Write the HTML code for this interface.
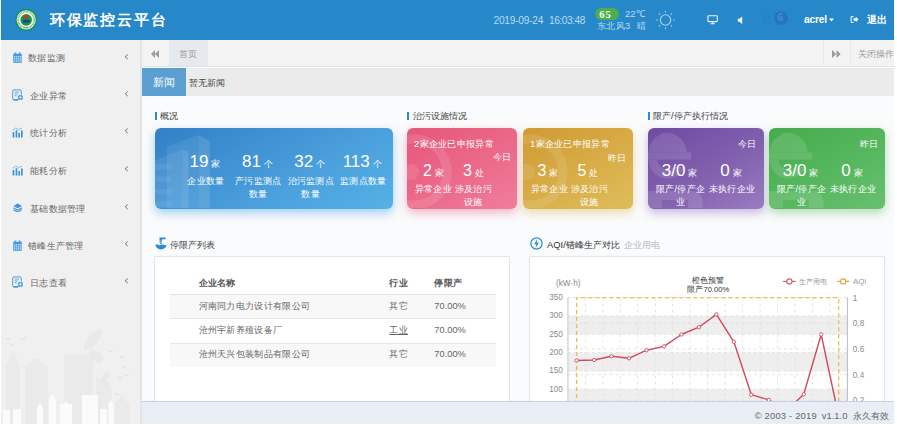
<!DOCTYPE html>
<html><head><meta charset="utf-8">
<style>
*{margin:0;padding:0;box-sizing:border-box}
html,body{width:897px;height:429px;overflow:hidden;background:#fff;font-family:"Liberation Sans",sans-serif}
.abs{position:absolute;white-space:nowrap}
#app{position:absolute;left:1px;top:0;width:893px;height:424px;overflow:hidden;background:#fafbfc}
#hdr{position:absolute;left:0;top:0;width:893px;height:40px;background:#2687c9}
#side{position:absolute;left:0;top:40px;width:139px;height:384px;background:#f0f0f0}
#sideb{position:absolute;left:139px;top:40px;width:2px;height:384px;background:#dfe5ea}
.mi{position:absolute;left:0;width:139px;height:20px;font-size:9.3px;color:#666}
.mi .t{position:absolute;left:27px;top:4px;font-size:9.4px;letter-spacing:0.3px;white-space:nowrap;line-height:12px}
.mi .ch{position:absolute;left:123px;top:5px}
.mi svg.ic{position:absolute;left:11px;top:4px}
#tabs{position:absolute;left:141px;top:40px;width:752px;height:27px;background:#f3f3f3;border-bottom:1px solid #dce6ee}
#news{position:absolute;left:141px;top:68px;width:752px;height:28px;background:#ebebeb}
.sec{position:absolute;font-size:9.4px;color:#444;white-space:nowrap;line-height:10px}
.sec .bar{position:absolute;left:-5.3px;top:1px;width:2.2px;height:8px;background:#2a8ad4}
.card{position:absolute;top:128px;height:80.6px;border-radius:6px;color:#fff;overflow:hidden}
.num{position:absolute;top:24px;height:20px;text-align:center;white-space:nowrap;line-height:20px}
.num b{font-weight:normal;font-size:17px;vertical-align:baseline}
.num s{text-decoration:none;font-size:9.4px;margin-left:3px;vertical-align:baseline}
.lab{position:absolute;top:47px;text-align:center;font-size:9.4px;line-height:12.8px;letter-spacing:0.3px;word-break:break-all}
.t9{font-size:9.4px;line-height:10px;letter-spacing:0.3px}
.th{font-size:9.3px;line-height:10px;color:#555;font-weight:bold;letter-spacing:0.3px}
.td{font-size:9.3px;line-height:10px;color:#666;letter-spacing:0.3px}
.td2{font-size:9.3px;line-height:10px;color:#666}
.panel{position:absolute;top:256px;height:170px;background:#fff;border:1px solid #e3e7ec;border-radius:2px;box-shadow:0 0 2px rgba(0,0,0,0.06)}
#foot{position:absolute;left:141px;top:401px;width:752px;height:23px;background:#e9edf4;border-top:1px solid #c9cde6;font-size:9.5px;color:#555}
</style></head><body>
<div id="app">
  <!-- HEADER -->
  <div id="hdr">
    <svg class="abs" style="left:13.4px;top:8.7px" width="24" height="24" viewBox="0 0 24 24">
      <circle cx="12.2" cy="10.85" r="10.8" fill="#139043"/>
      <circle cx="12.2" cy="10.85" r="9.6" fill="#f2faf4"/>
      <circle cx="12.2" cy="10.85" r="8.1" fill="none" stroke="#5cb878" stroke-width="1.8" stroke-dasharray="0.9 0.6"/>
      <circle cx="12.2" cy="10.85" r="5.8" fill="#179447"/>
      <circle cx="12.1" cy="7.5" r="1.9" fill="#e8262c"/>
      <path d="M8.6 12.8L10 10.6 11 11.6 12.3 9.8 13.5 11.4 14.6 10.4 16 12.8 15.2 13.6H9.4z" fill="#283a8a"/>
      <path d="M10 18.3h4.4" stroke="#777" stroke-width="1" stroke-dasharray="1 0.5"/>
    </svg>
    <div class="abs" style="left:48.8px;top:11.4px;font-size:15.1px;line-height:18px;letter-spacing:1.8px;font-weight:bold;color:#fff">环保监控云平台</div>
    <div class="abs" style="left:492.5px;top:14.5px;font-size:10.2px;line-height:11px;color:#b9dbf3;letter-spacing:-0.25px">2019-09-24<span style="margin-left:5.8px;letter-spacing:-0.45px">16:03:48</span></div>
    <div class="abs" style="left:594px;top:8px;width:24px;height:12px;border-radius:6px;background:#4cae4c"></div>
    <div class="abs" style="left:598.3px;top:9.5px;font-size:10.6px;line-height:10px;letter-spacing:1px;font-weight:bold;color:#fff;font-family:'Liberation Serif',serif">65</div>
    <div class="abs" style="left:624px;top:9px;font-size:9.5px;line-height:10px;color:#b9dbf3">22℃</div>
    <div class="abs" style="left:596px;top:21px;font-size:9.3px;line-height:10px;color:#b9dbf3;letter-spacing:0.3px">东北风3<span style="margin-left:6.5px">晴</span></div>
    <svg class="abs" style="left:654px;top:10px" width="21" height="21" viewBox="0 0 21 21" fill="none" stroke="#a9d3f2" stroke-width="1.1">
      <circle cx="10.5" cy="10" r="5.2"/>
      <path d="M10.5 0.8v1.6M10.5 17.6v1.6M1.3 10h1.6M18.1 10h1.6M4 3.5l1.1 1.1M15.9 15.4l1.1 1.1M4 16.5l1.1-1.1M15.9 4.6l1.1-1.1"/>
    </svg>
    <svg class="abs" style="left:705.5px;top:14.5px" width="12" height="10" viewBox="0 0 12 10" fill="none" stroke="#eaf4fb" stroke-width="1.1">
      <rect x="0.9" y="0.8" width="9.4" height="5.8" rx="0.8"/>
      <path d="M5.6 6.8v1.6M3.4 8.8h4.4"/>
    </svg>
    <svg class="abs" style="left:736px;top:15.5px" width="7" height="9" viewBox="0 0 7 9"><path d="M0.8 2.8h1.8L5.2 0.5v7.5L2.6 5.7H0.8z" fill="#fff"/></svg>
    <svg class="abs" style="left:761px;top:14px" width="10" height="11" viewBox="0 0 10 11" fill="none" stroke="#2d7cc2" stroke-width="1"><path d="M5 1C2.8 1 2.3 3 2.3 5v2.5L1 9h8L7.7 7.5V5C7.7 3 7.2 1 5 1zM4 10h2"/></svg>
    <div class="abs" style="left:773px;top:11px;width:13.5px;height:13.5px;border-radius:7px;background:#2676bd"></div>
    <div class="abs" style="left:776.5px;top:12.3px;font-size:10px;line-height:11px;font-weight:bold;color:#3b8fd6">6</div>
    <div class="abs" style="left:803px;top:14px;font-size:10.2px;line-height:11px;font-weight:bold;color:#fff;letter-spacing:-0.2px">acrel</div>
    <svg class="abs" style="left:828px;top:18.3px" width="5" height="4" viewBox="0 0 5 4"><path d="M0 0.5h5L2.5 3.5z" fill="#fff"/></svg>
    <svg class="abs" style="left:849px;top:16px" width="9" height="7" viewBox="0 0 9 7" fill="none" stroke="#fff" stroke-width="1"><path d="M3.5 0.6H1.1v5.8h2.4"/><path d="M3.5 2.3h2.3V0.8L8.5 3.5 5.8 6.2V4.7H3.5z" fill="#fff" stroke="none"/></svg>
    <div class="abs" style="left:866px;top:14px;font-size:10.2px;line-height:11px;font-weight:bold;color:#fff">退出</div>
  </div>

  <!-- SIDEBAR -->
  <div id="side">
    <svg class="abs" style="left:0;top:280px" width="139" height="104" viewBox="0 0 139 104">
      <g fill="#eaeaea">
        <path d="M5 104V43h2v-4h2v-4h2v-3h2v3h2v4h2v4h2v61z"/>
        <path d="M24 104V45h5v-3h3v-3h7v3h3v3h5v59z"/>
        <path d="M63 104V35h29v69z"/>
        <path d="M95 104V56l16 14v34z"/>
        <path d="M114 104V82h2v-3h3v-4h3v4h3v3h4v22z"/>
      </g>
      <g fill="#e9e9e9">
        <ellipse cx="92" cy="20" rx="5" ry="13" transform="rotate(40 92 20)"/>
        <ellipse cx="95" cy="36" rx="5" ry="8" transform="rotate(-50 95 36)"/>
        <ellipse cx="104" cy="57" rx="3" ry="7" transform="rotate(35 104 57)"/>
        <ellipse cx="106" cy="64" rx="3" ry="4" transform="rotate(-50 106 64)"/>
      </g>
      <g fill="#fbfbfb">
        <path d="M2 104V90h7v14z"/><path d="M12 104V89h8v15z"/>
        <path d="M36 104V88l3-5 3 5v16z"/><path d="M48 104V80l3-6 4 6v24z"/>
        <path d="M59 104V84h3l3-3 3 3h3v20z"/><path d="M81 104V75h16v29z"/>
        <path d="M99 104V89h7v15z"/><path d="M107.5 104V84l2.5-4 2.5 4v20z"/>
      </g>
      <g fill="none" stroke="#d8d8d8" stroke-width="0.8">
        <path d="M5 18l2 2 2-2M9 24l2 2 2-2M20 18l2 2 3-3"/>
        <path d="M108 30l2 2 2-2M119 36l2 2 2-2M121 46l2 2 2-2M124 54l2 2 2-2M114 73l2 2 2-2M117 57l2 2 2-2"/>
      </g>
    </svg>
    <div class="mi" style="top:8px">
      <svg class="ic" style="left:10.5px" width="11" height="11" viewBox="0 0 11 11"><path d="M1.2 1.8h8.6v9H1.2z" fill="#4598e2"/><path d="M2.6 0.4h1.6v2.4H2.6zM6.8 0.4h1.6v2.4H6.8z" fill="#4598e2"/><g fill="#d4e7f8"><rect x="2.1" y="4.1" width="1.3" height="1.3"/><rect x="4.1" y="4.1" width="1.3" height="1.3"/><rect x="6.1" y="4.1" width="1.3" height="1.3"/><rect x="8.1" y="4.1" width="1.3" height="1.3"/><rect x="2.1" y="6.2" width="1.3" height="1.3"/><rect x="4.1" y="6.2" width="1.3" height="1.3"/><rect x="6.1" y="6.2" width="1.3" height="1.3"/><rect x="8.1" y="6.2" width="1.3" height="1.3"/><rect x="2.1" y="8.3" width="1.3" height="1.3"/><rect x="4.1" y="8.3" width="1.3" height="1.3"/><rect x="6.1" y="8.3" width="1.3" height="1.3"/><rect x="8.1" y="8.3" width="1.3" height="1.3"/></g></svg>
      <span class="t">数据监测</span><svg class="ch" style="top:6px" width="5" height="6" viewBox="0 0 5 6"><path d="M3.8 0.5L1.2 2.8 3.8 5.1" fill="none" stroke="#666" stroke-width="0.9"/></svg>
    </div>
    <div class="mi" style="top:45.6px">
      <svg class="ic" style="top:3px;left:11px" width="12" height="12" viewBox="0 0 12 12"><path d="M6.2 10.9H1.9c-.7 0-1.2-.5-1.2-1.2V2.1c0-.7.5-1.2 1.2-1.2h6.2c.7 0 1.2.5 1.2 1.2v3.4" fill="none" stroke="#4a9be0" stroke-width="1"/><path d="M2.6 3.1h4.6M2.6 4.9h3.2M2.6 6.7h2" stroke="#5aa5e6" stroke-width="0.9"/><path d="M1.5 10.9h4.5" stroke="#2f86d8" stroke-width="1.1"/><circle cx="8.4" cy="8.4" r="2.6" fill="#4a9be0"/><circle cx="8.4" cy="8.4" r="1.1" fill="#e6f0fa"/><path d="M8.4 5.6v1.2M8.4 10v1.2M5.6 8.4h1.2M10 8.4h1.2" stroke="#e6f0fa" stroke-width="0.5"/></svg>
      <span class="t" style="left:29px">企业异常</span><svg class="ch" width="5" height="6" viewBox="0 0 5 6"><path d="M3.8 0.5L1.2 2.8 3.8 5.1" fill="none" stroke="#666" stroke-width="0.9"/></svg>
    </div>
    <div class="mi" style="top:83.3px">
      <svg class="ic" style="left:11.4px" width="11" height="11" viewBox="0 0 11 11"><g fill="#3d92dc"><rect x="0.6" y="5" width="1.7" height="5.5"/><rect x="3.6" y="3.2" width="1.7" height="7.3"/><rect x="6.3" y="6" width="1.7" height="4.5"/><rect x="9" y="3.5" width="1.7" height="7"/></g><path d="M0.6 3.3L3.8 1 6.5 2.8 10 0.8" fill="none" stroke="#6aacea" stroke-width="0.8"/></svg>
      <span class="t" style="left:29px">统计分析</span><svg class="ch" width="5" height="6" viewBox="0 0 5 6"><path d="M3.8 0.5L1.2 2.8 3.8 5.1" fill="none" stroke="#666" stroke-width="0.9"/></svg>
    </div>
    <div class="mi" style="top:121px">
      <svg class="ic" style="left:11.4px" width="11" height="11" viewBox="0 0 11 11"><g fill="#3d92dc"><rect x="0.6" y="5" width="1.7" height="5.5"/><rect x="3.6" y="3.2" width="1.7" height="7.3"/><rect x="6.3" y="6" width="1.7" height="4.5"/><rect x="9" y="3.5" width="1.7" height="7"/></g><path d="M0.6 3.3L3.8 1 6.5 2.8 10 0.8" fill="none" stroke="#6aacea" stroke-width="0.8"/></svg>
      <span class="t" style="left:29px">能耗分析</span><svg class="ch" width="5" height="6" viewBox="0 0 5 6"><path d="M3.8 0.5L1.2 2.8 3.8 5.1" fill="none" stroke="#666" stroke-width="0.9"/></svg>
    </div>
    <div class="mi" style="top:158.6px">
      <svg class="ic" style="left:12px;top:4.2px" width="9.4" height="9.6" viewBox="0 0 10 10"><path d="M5 0.5L9.5 3 5 5.5 0.5 3z" fill="#3d92dc"/><path d="M0.5 5L5 7.5 9.5 5M0.5 7L5 9.5 9.5 7" fill="none" stroke="#3d92dc" stroke-width="1.2"/></svg>
      <span class="t" style="left:29px">基础数据管理</span><svg class="ch" width="5" height="6" viewBox="0 0 5 6"><path d="M3.8 0.5L1.2 2.8 3.8 5.1" fill="none" stroke="#666" stroke-width="0.9"/></svg>
    </div>
    <div class="mi" style="top:195.5px">
      <svg class="ic" style="left:10.5px" width="11" height="11" viewBox="0 0 11 11"><path d="M1.2 1.8h8.6v9H1.2z" fill="#4598e2"/><path d="M2.6 0.4h1.6v2.4H2.6zM6.8 0.4h1.6v2.4H6.8z" fill="#4598e2"/><g fill="#d4e7f8"><rect x="2.1" y="4.1" width="1.3" height="1.3"/><rect x="4.1" y="4.1" width="1.3" height="1.3"/><rect x="6.1" y="4.1" width="1.3" height="1.3"/><rect x="8.1" y="4.1" width="1.3" height="1.3"/><rect x="2.1" y="6.2" width="1.3" height="1.3"/><rect x="4.1" y="6.2" width="1.3" height="1.3"/><rect x="6.1" y="6.2" width="1.3" height="1.3"/><rect x="8.1" y="6.2" width="1.3" height="1.3"/><rect x="2.1" y="8.3" width="1.3" height="1.3"/><rect x="4.1" y="8.3" width="1.3" height="1.3"/><rect x="6.1" y="8.3" width="1.3" height="1.3"/><rect x="8.1" y="8.3" width="1.3" height="1.3"/></g></svg>
      <span class="t">错峰生产管理</span><svg class="ch" width="5" height="6" viewBox="0 0 5 6"><path d="M3.8 0.5L1.2 2.8 3.8 5.1" fill="none" stroke="#666" stroke-width="0.9"/></svg>
    </div>
    <div class="mi" style="top:232.7px">
      <svg class="ic" style="top:3px;left:11px" width="12" height="12" viewBox="0 0 12 12"><path d="M6.2 10.9H1.9c-.7 0-1.2-.5-1.2-1.2V2.1c0-.7.5-1.2 1.2-1.2h6.2c.7 0 1.2.5 1.2 1.2v3.4" fill="none" stroke="#4a9be0" stroke-width="1"/><path d="M2.6 3.1h4.6M2.6 4.9h3.2M2.6 6.7h2" stroke="#5aa5e6" stroke-width="0.9"/><path d="M1.5 10.9h4.5" stroke="#2f86d8" stroke-width="1.1"/><circle cx="8.4" cy="8.4" r="2.6" fill="#4a9be0"/><circle cx="8.4" cy="8.4" r="1.1" fill="#e6f0fa"/><path d="M8.4 5.6v1.2M8.4 10v1.2M5.6 8.4h1.2M10 8.4h1.2" stroke="#e6f0fa" stroke-width="0.5"/></svg>
      <span class="t" style="left:29px">日志查看</span><svg class="ch" width="5" height="6" viewBox="0 0 5 6"><path d="M3.8 0.5L1.2 2.8 3.8 5.1" fill="none" stroke="#666" stroke-width="0.9"/></svg>
    </div>
  </div>
  <div id="sideb"></div>

  <!-- TABS -->
  <div id="tabs">
    <svg class="abs" style="left:9.3px;top:10px" width="8" height="8" viewBox="0 0 8 8"><path d="M4 0v8L0 4zM8 0v8L4 4z" fill="#9a9a9a"/></svg>
    <div class="abs" style="left:27px;top:0;width:39px;height:26px;background:#e6eaee"></div>
    <div class="abs" style="left:37px;top:9px;font-size:9.3px;line-height:10px;color:#999">首页</div>
    <div class="abs" style="left:681.4px;top:0;width:1px;height:26px;background:#e9e9e9"></div>
    <div class="abs" style="left:707.8px;top:0;width:1px;height:26px;background:#e9e9e9"></div>
    <svg class="abs" style="left:690px;top:10px" width="9" height="8" viewBox="0 0 9 8"><path d="M0 0v8L4.2 4zM4.5 0v8L8.7 4z" fill="#9a9a9a"/></svg>
    <div class="abs" style="left:715.5px;top:9px;font-size:9.3px;line-height:10px;color:#999;letter-spacing:0.3px">关闭操作</div>
  </div>
  <div id="news">
    <div class="abs" style="left:0;top:0;width:44px;height:28px;background:#5b9fd0"></div>
    <div class="abs" style="left:11.3px;top:8.4px;font-size:10.9px;line-height:12px;color:#fff">新闻</div>
    <div class="abs" style="left:47px;top:10px;font-size:9.3px;line-height:10px;color:#444">暂无新闻</div>
  </div>

  <!-- SECTION TITLES -->
  <div class="sec" style="left:159px;top:111px">概况<i class="bar"></i></div>
  <div class="sec" style="left:411.5px;top:111px">治污设施情况<i class="bar"></i></div>
  <div class="sec" style="left:652px;top:111px">限产/停产执行情况<i class="bar"></i></div>

  <!-- BLUE CARD -->
  <div class="card" style="left:154px;width:238px;background:linear-gradient(150deg,#3280c7 0%,#4a9fdc 60%,#55b1e6 100%);box-shadow:0 4px 10px rgba(70,165,230,0.5)">
    <svg class="abs" style="left:0;top:0" width="80" height="80" viewBox="0 0 80 80">
      <g fill="#fff">
        <path d="M12 18.5L43.7 7.1 54.8 13.2V80H12z" fill-opacity="0.08"/>
        <path d="M43.7 7.1L54.8 13.2V80H43.7z" fill-opacity="0.05"/>
        <path d="M0 32.5L27.5 21.3 33.5 24V80H0z" fill-opacity="0.08"/>
        <path d="M27.5 21.3L33.5 24V80H27.5z" fill-opacity="0.05"/>
        <rect x="0" y="36" width="16.5" height="5.5" fill-opacity="0.07"/>
        <rect x="0" y="48.5" width="16.5" height="5.5" fill-opacity="0.07"/>
        <rect x="0" y="61" width="16.5" height="5.5" fill-opacity="0.07"/>
        <rect x="0" y="73" width="16.5" height="5.5" fill-opacity="0.07"/>
      </g>
    </svg>
    <div class="num" style="left:23.8px;width:52.4px"><b>19</b><s>家</s></div>
    <div class="num" style="left:76.2px;width:52.4px"><b>81</b><s>个</s></div>
    <div class="num" style="left:128.6px;width:52.4px"><b>32</b><s>个</s></div>
    <div class="num" style="left:181px;width:52.4px"><b>113</b><s>个</s></div>
    <div class="lab" style="left:24.8px;width:52.4px">企业数量</div>
    <div class="lab" style="left:77.2px;width:52.4px">产污监测点数量</div>
    <div class="lab" style="left:129.6px;width:52.4px">治污监测点数量</div>
    <div class="lab" style="left:182px;width:52.4px">监测点数量</div>
  </div>

  <!-- PINK CARD -->
  <div class="card" style="left:406px;width:110px;background:linear-gradient(150deg,#e6567a 0%,#ec6c8c 60%,#ef7e9b 100%);box-shadow:0 4px 10px rgba(235,95,130,0.45)">
    <svg class="abs" style="left:0;top:0" width="60" height="80" viewBox="0 0 60 80">
      <path d="M7 6.3a37.7 37.7 0 1 1 0 75.4a37.7 37.7 0 1 1 0-75.4zM7 15.5a28.5 28.5 0 1 0 0 57a28.5 28.5 0 1 0 0-57z" fill="#fff" fill-opacity="0.11" fill-rule="evenodd"/>
      <circle cx="4" cy="44" r="8" fill="#fff" fill-opacity="0.1"/>
    </svg>
    <div class="abs t9" style="left:7px;top:11px">2家企业已申报异常</div>
    <div class="abs t9" style="left:85.5px;top:24px">今日</div>
    <div class="num" style="left:6.5px;width:40px;top:33px"><b style="font-size:16px">2</b><s>家</s></div>
    <div class="num" style="left:46.5px;width:40px;top:33px"><b style="font-size:16px">3</b><s>处</s></div>
    <div class="lab" style="left:6.5px;width:40px;top:55px">异常企业</div>
    <div class="lab" style="left:46.5px;width:40px;top:55px">涉及治污设施</div>
  </div>

  <!-- YELLOW CARD -->
  <div class="card" style="left:522px;width:110px;background:linear-gradient(150deg,#d09a32 0%,#d9af4a 60%,#dfbd5c 100%);box-shadow:0 4px 10px rgba(215,175,80,0.45)">
    <svg class="abs" style="left:0;top:0" width="60" height="80" viewBox="0 0 60 80">
      <path d="M7 6.3a37.7 37.7 0 1 1 0 75.4a37.7 37.7 0 1 1 0-75.4zM7 15.5a28.5 28.5 0 1 0 0 57a28.5 28.5 0 1 0 0-57z" fill="#fff" fill-opacity="0.11" fill-rule="evenodd"/>
      <circle cx="4" cy="44" r="8" fill="#fff" fill-opacity="0.1"/>
    </svg>
    <div class="abs t9" style="left:7px;top:11px">1家企业已申报异常</div>
    <div class="abs t9" style="left:85px;top:25px">昨日</div>
    <div class="num" style="left:5px;width:40px;top:33px"><b style="font-size:16px">3</b><s>家</s></div>
    <div class="num" style="left:45px;width:40px;top:33px"><b style="font-size:16px">5</b><s>处</s></div>
    <div class="lab" style="left:6.5px;width:40px;top:55px">异常企业</div>
    <div class="lab" style="left:46.5px;width:40px;top:55px">涉及治污设施</div>
  </div>

  <!-- PURPLE CARD -->
  <div class="card" style="left:647px;width:116px;background:linear-gradient(150deg,#6e4aa2 0%,#8463b0 60%,#9a7cc0 100%);box-shadow:0 4px 10px rgba(140,100,190,0.45)">
    <svg class="abs" style="left:0;top:0" width="80" height="80" viewBox="0 0 80 80">
      <defs><mask id="em1"><rect x="-10" y="-10" width="100" height="100" fill="#fff"/><circle cx="19.5" cy="31.5" r="10" fill="#000"/><rect x="-10" y="20" width="100" height="11.5" fill="#000"/><rect x="19.5" y="31" width="30" height="8" fill="#000"/></mask></defs>
      <g fill="#fff" opacity="0.12">
        <path d="M13.3 5h11v5.5h-11z"/>
        <path d="M0.5 24.2A19 19 0 0 1 38.5 24.2z"/>
        <circle cx="19.5" cy="31.5" r="19" mask="url(#em1)"/>
        <path d="M0 24.2h43.2v7.3H0z"/>
        <path d="M0 63h44.5a10 10 0 0 1 10 10v7H40V72H14v8H0z"/>
      </g>
    </svg>
    <div class="abs t9" style="left:89.5px;top:11px">今日</div>
    <div class="num" style="left:6px;width:51.3px;top:33px"><b>3/0</b><s>家</s></div>
    <div class="num" style="left:57.3px;width:51.3px;top:33px"><b>0</b><s>家</s></div>
    <div class="lab" style="left:7px;width:51.3px;top:55px">限产/停产企业</div>
    <div class="lab" style="left:58.3px;width:51.3px;top:55px">未执行企业</div>
  </div>

  <!-- GREEN CARD -->
  <div class="card" style="left:768px;width:116px;background:linear-gradient(150deg,#46ab4c 0%,#58b860 60%,#68c070 100%);box-shadow:0 4px 10px rgba(90,185,100,0.45)">
    <svg class="abs" style="left:0;top:0" width="80" height="80" viewBox="0 0 80 80">
      <defs><mask id="em2"><rect x="-10" y="-10" width="100" height="100" fill="#fff"/><circle cx="19.5" cy="31.5" r="10" fill="#000"/><rect x="-10" y="20" width="100" height="11.5" fill="#000"/><rect x="19.5" y="31" width="30" height="8" fill="#000"/></mask></defs>
      <g fill="#fff" opacity="0.12">
        <path d="M13.3 5h11v5.5h-11z"/>
        <path d="M0.5 24.2A19 19 0 0 1 38.5 24.2z"/>
        <circle cx="19.5" cy="31.5" r="19" mask="url(#em2)"/>
        <path d="M0 24.2h43.2v7.3H0z"/>
        <path d="M0 63h44.5a10 10 0 0 1 10 10v7H40V72H14v8H0z"/>
      </g>
    </svg>
    <div class="abs t9" style="left:90.5px;top:11px">昨日</div>
    <div class="num" style="left:6px;width:51.3px;top:33px"><b>3/0</b><s>家</s></div>
    <div class="num" style="left:57.3px;width:51.3px;top:33px"><b>0</b><s>家</s></div>
    <div class="lab" style="left:7px;width:51.3px;top:55px">限产/停产企业</div>
    <div class="lab" style="left:58.3px;width:51.3px;top:55px">未执行企业</div>
  </div>

  <!-- TABLE PANEL -->
  <svg class="abs" style="left:154.3px;top:237px" width="12" height="13" viewBox="0 0 12 13">
    <path d="M0.4 7.8Q1.8 7.1 3.2 7.8T6 7.8T8.8 7.8T11.6 7.8C11.2 10.6 8.6 12.4 6 12.4S0.8 10.6 0.4 7.8z" fill="#2a8ad4"/>
    <path d="M4.5 0.6h6.2v1.7H7v1.4H4.5zM4.5 4.3H7v1.2H4.5zM5 6.1h1.6v1H5z" fill="#2a8ad4"/>
  </svg>
  <div class="sec" style="left:168.8px;top:240px">停限产列表</div>
  <div class="panel" style="left:152.8px;width:356.5px">
    <div class="abs" style="left:15px;top:37px;width:326px;height:1px;background:#e3e3e3"></div>
    <div class="abs" style="left:15px;top:38px;width:326px;height:24px;background:#f8f8f8;border-bottom:1px solid #e6e6e6"></div>
    <div class="abs" style="left:15px;top:86px;width:326px;height:1px;background:#e6e6e6"></div>
    <div class="abs" style="left:15px;top:87px;width:326px;height:23px;background:#f8f8f8"></div>
    <div class="abs th" style="left:43.8px;top:21px">企业名称</div>
    <div class="abs th" style="left:234.5px;top:21px">行业</div>
    <div class="abs th" style="left:279.5px;top:21px">停限产</div>
    <div class="abs td" style="left:43.8px;top:44px">河南同力电力设计有限公司</div>
    <div class="abs td" style="left:234.5px;top:44px">其它</div>
    <div class="abs td2" style="left:279.5px;top:44px">70.00%</div>
    <div class="abs td" style="left:43.8px;top:68.3px">沧州宇新养殖设备厂</div>
    <div class="abs td" style="left:234.5px;top:68.3px;text-decoration:underline">工业</div>
    <div class="abs td2" style="left:279.5px;top:68.3px">70.00%</div>
    <div class="abs td" style="left:43.8px;top:92px">沧州天兴包装制品有限公司</div>
    <div class="abs td" style="left:234.5px;top:92px">其它</div>
    <div class="abs td2" style="left:279.5px;top:92px">70.00%</div>
  </div>

  <!-- CHART PANEL -->
  <svg class="abs" style="left:529px;top:237px" width="13" height="13" viewBox="0 0 13 13">
    <circle cx="6.5" cy="6.5" r="5.6" fill="none" stroke="#2a8ad4" stroke-width="1.2"/>
    <path d="M7.3 2.3L4 7.2h2.3L5.6 10.7 9 5.8H6.7z" fill="#2a8ad4"/>
  </svg>
  <div class="sec" style="left:546px;top:240px;color:#333">AQI/错峰生产对比 <span style="color:#b0b8c4;margin-left:2px">企业用电</span></div>
  <div class="panel" style="left:528px;width:356px"></div>
  <svg class="abs" style="left:0;top:0" width="893" height="424" viewBox="1 0 893 424">
    <defs><clipPath id="cc"><rect x="529" y="257" width="337" height="144"/></clipPath></defs>
    <g clip-path="url(#cc)">
    <rect x="567.9" y="315.94" width="279.5" height="18.34" fill="#efeeee"/><rect x="567.9" y="352.63" width="279.5" height="18.34" fill="#efeeee"/><rect x="567.9" y="389.31" width="279.5" height="18.34" fill="#efeeee"/>
    <path d="M567.9 297.60H847.4M567.9 315.94H847.4M567.9 334.29H847.4M567.9 352.63H847.4M567.9 370.97H847.4M567.9 389.31H847.4M567.9 407.66H847.4M567.9 426.00H847.4M567.9 297.60H847.4M567.9 323.28H847.4M567.9 348.96H847.4M567.9 374.64H847.4M567.9 400.32H847.4M567.9 426.00H847.4" stroke="#dedede" stroke-width="0.8" stroke-dasharray="3 3" fill="none"/>
    <path d="M585.37 297.6V426.0M602.84 297.6V426.0M620.31 297.6V426.0M637.78 297.6V426.0M655.25 297.6V426.0M672.72 297.6V426.0M690.19 297.6V426.0M707.66 297.6V426.0M725.13 297.6V426.0M742.60 297.6V426.0M760.07 297.6V426.0M777.54 297.6V426.0M795.01 297.6V426.0M812.48 297.6V426.0M829.95 297.6V426.0" stroke="#dedede" stroke-width="0.8" stroke-dasharray="3 3" fill="none"/>
    <path d="M567.9 297.6V426.0" stroke="#d6dbe2" stroke-width="1.6"/>
    <path d="M847.4 297.6V426.0" stroke="#b8bcc2" stroke-width="1"/>
    <path d="M576.63 426.0V297.6H838.68V426.0" stroke="#f5b852" stroke-width="1.3" stroke-dasharray="4 3" fill="none"/>
    <g font-size="8.2" fill="#8a8a8a" font-family="Liberation Sans, sans-serif"><text x="562.8" y="300.00" text-anchor="end">350</text><text x="562.8" y="318.34" text-anchor="end">300</text><text x="562.8" y="336.69" text-anchor="end">250</text><text x="562.8" y="355.03" text-anchor="end">200</text><text x="562.8" y="373.37" text-anchor="end">150</text><text x="562.8" y="391.71" text-anchor="end">100</text><text x="562.8" y="410.06" text-anchor="end">50</text><text x="562.8" y="428.40" text-anchor="end">0</text><text x="852.8" y="300.50">1</text><text x="852.8" y="326.18">0.8</text><text x="852.8" y="351.86">0.6</text><text x="852.8" y="377.54">0.4</text><text x="852.8" y="403.22">0.2</text><text x="852.8" y="428.90">0</text>
      <text x="556" y="286">(kW·h)</text>
    </g>
    <path d="M576.63 360.5 L594.11 360.0 L611.57 356.3 L629.04 358.3 L646.51 350.2 L663.99 346.4 L681.45 334.5 L698.92 327.2 L716.39 314.4 L733.87 341.8 L751.34 394.7 L768.80 399.9 L786.27 411.0 L803.74 394.3 L821.21 334.5 L838.68 416.4" stroke="#d04a5e" stroke-width="1.4" fill="none" stroke-linejoin="round"/>
    <g fill="#fff" stroke="#d04a5e" stroke-width="0.9"><circle cx="576.63" cy="360.5" r="1.7"/><circle cx="594.11" cy="360.0" r="1.7"/><circle cx="611.57" cy="356.3" r="1.7"/><circle cx="629.04" cy="358.3" r="1.7"/><circle cx="646.51" cy="350.2" r="1.7"/><circle cx="663.99" cy="346.4" r="1.7"/><circle cx="681.45" cy="334.5" r="1.7"/><circle cx="698.92" cy="327.2" r="1.7"/><circle cx="716.39" cy="314.4" r="1.7"/><circle cx="733.87" cy="341.8" r="1.7"/><circle cx="751.34" cy="394.7" r="1.7"/><circle cx="768.80" cy="399.9" r="1.7"/><circle cx="786.27" cy="411.0" r="1.7"/><circle cx="803.74" cy="394.3" r="1.7"/><circle cx="821.21" cy="334.5" r="1.7"/><circle cx="838.68" cy="416.4" r="1.7"/></g>
    <g font-size="7.6" fill="#333" text-anchor="middle" font-family="Liberation Sans, sans-serif">
      <text x="708.3" y="283.2" letter-spacing="0.2">橙色预警</text>
      <text x="708.3" y="291.5">限产70.00%</text>
    </g>
    <path d="M783 281.4h12.7" stroke="#d85f72" stroke-width="1.2"/><circle cx="789.4" cy="281.4" r="2.6" fill="#fff" stroke="#d85f72" stroke-width="1.2"/>
    <path d="M837.2 281.4h12" stroke="#e2a53c" stroke-width="1.2"/><circle cx="843.2" cy="281.4" r="2.6" fill="#fff" stroke="#e2a53c" stroke-width="1.2"/>
    <g font-size="6.7" fill="#9a9a9a" font-family="Liberation Sans, sans-serif"><text x="799" y="284.4">生产用电</text><text x="853" y="284.4" font-size="8">AQI</text></g>
    </g>
  </svg>

  <!-- FOOTER -->
  <div id="foot"><div class="abs" style="right:5px;top:7.5px;line-height:11px;color:#666;font-size:9.4px"><span style="letter-spacing:0.2px">© 2003 - 2019</span><span style="margin-left:5px">v1.1.0</span><span style="margin-left:5.6px">永久有效</span></div></div>
</div>
</body></html>
